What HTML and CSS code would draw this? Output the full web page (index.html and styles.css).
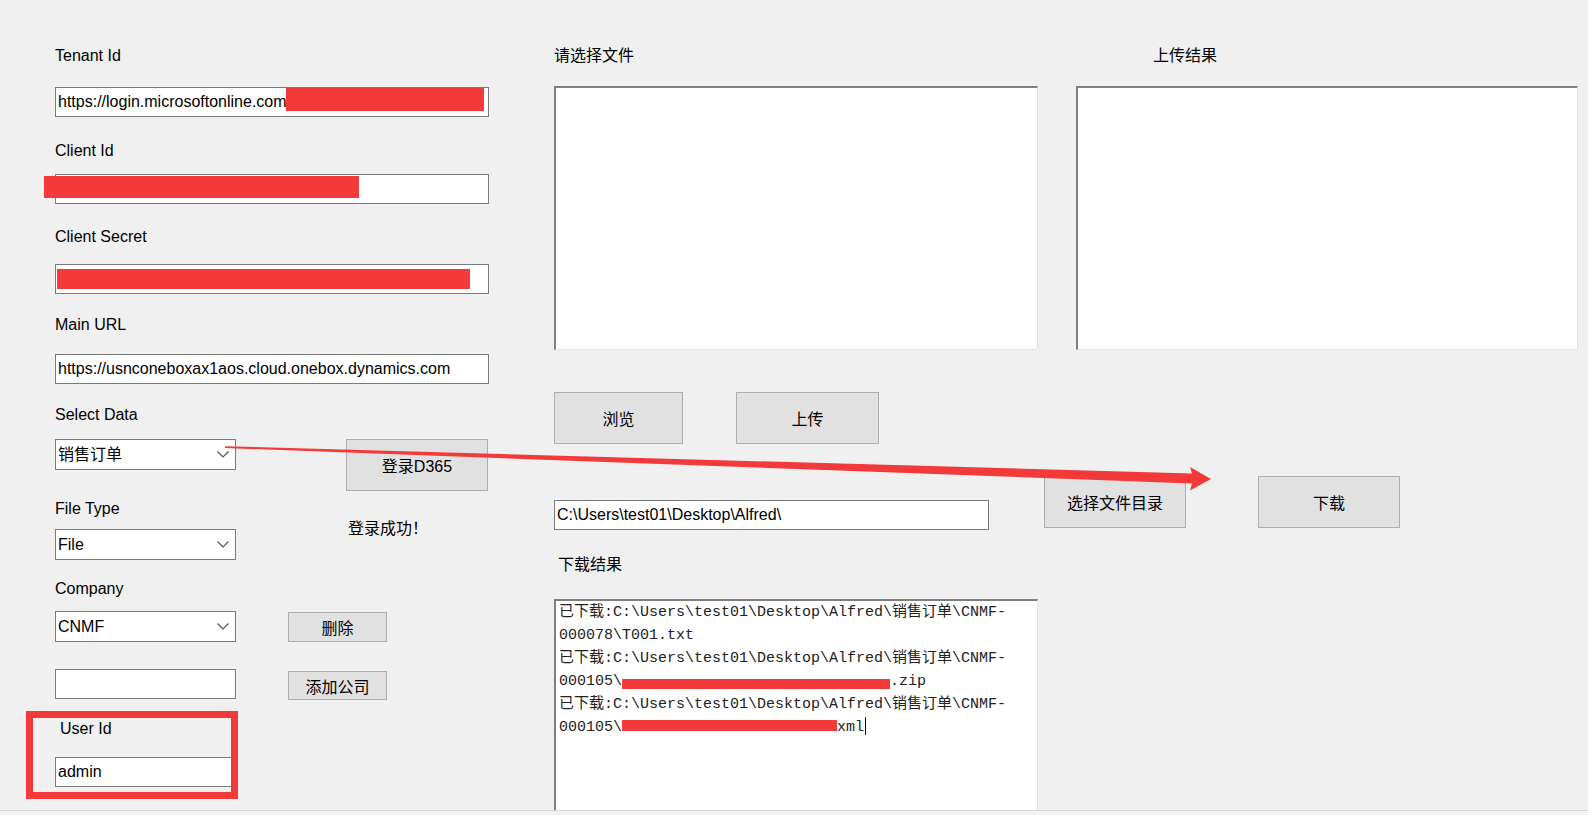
FILE: index.html
```html
<!DOCTYPE html>
<html lang="zh-cn">
<head>
    <meta charset="UTF-8">
    <title>D365 文件上传下载</title>
    <link rel="stylesheet" href="styles.css">
</head>
<body>
    <div class="window">
        <div class="left">
            <div class="field tenant">
                <div class="lbl">Tenant Id</div>
                <div class="textbox">https://login.microsoftonline.com<span class="redact r-tenant"></span></div>
            </div>
            <div class="field client">
                <div class="lbl">Client Id</div>
                <div class="textbox"><span class="redact r-client"></span></div>
            </div>
            <div class="field secret">
                <div class="lbl">Client Secret</div>
                <div class="textbox"><span class="redact r-secret"></span></div>
            </div>
            <div class="field mainurl">
                <div class="lbl">Main URL</div>
                <div class="textbox">https://usnconeboxax1aos.cloud.onebox.dynamics.com</div>
            </div>

            <div class="lower">
                <div class="col-a">
                    <div class="field sel-data">
                        <div class="lbl">Select Data</div>
                        <div class="combo"><span>销售订单</span><svg class="chev" width="12" height="7" viewBox="0 0 12 7"><path d="M0.5 0.5 L6 6 L11.5 0.5" fill="none" stroke="#555" stroke-width="1.2"/></svg></div>
                    </div>
                    <div class="field file-type">
                        <div class="lbl">File Type</div>
                        <div class="combo"><span>File</span><svg class="chev" width="12" height="7" viewBox="0 0 12 7"><path d="M0.5 0.5 L6 6 L11.5 0.5" fill="none" stroke="#555" stroke-width="1.2"/></svg></div>
                    </div>
                    <div class="field company">
                        <div class="lbl">Company</div>
                        <div class="combo"><span>CNMF</span><svg class="chev" width="12" height="7" viewBox="0 0 12 7"><path d="M0.5 0.5 L6 6 L11.5 0.5" fill="none" stroke="#555" stroke-width="1.2"/></svg></div>
                    </div>
                    <div class="textbox new-company"></div>
                </div>
                <div class="col-b">
                    <div class="btn btn-login">登录D365</div>
                    <div class="status">登录成功！</div>
                    <div class="btn btn-del">删除</div>
                    <div class="btn btn-add">添加公司</div>
                </div>
            </div>

            <div class="field user">
                <div class="lbl">User Id</div>
                <div class="textbox">admin</div>
                <div class="mark-box"></div>
            </div>
        </div>

        <div class="right">
            <div class="top-row">
                <div class="panel">
                    <div class="lbl">请选择文件</div>
                    <div class="listbox"></div>
                </div>
                <div class="panel panel-result">
                    <div class="lbl">上传结果</div>
                    <div class="listbox"></div>
                </div>
            </div>

            <div class="btn-row">
                <div class="btn btn-browse">浏览</div>
                <div class="btn btn-upload">上传</div>
            </div>

            <div class="path-row">
                <div class="textbox path">C:\Users\test01\Desktop\Alfred\</div>
                <div class="btn btn-dir">选择文件目录</div>
                <div class="btn btn-down">下载</div>
            </div>

            <div class="lbl down-lbl">下载结果</div>
            <div class="result">
                <div>已下载:C:\Users\test01\Desktop\Alfred\销售订单\CNMF-</div>
                <div>000078\T001.txt</div>
                <div>已下载:C:\Users\test01\Desktop\Alfred\销售订单\CNMF-</div>
                <div>000105\<span class="redact-line r-zip"></span>.zip</div>
                <div>已下载:C:\Users\test01\Desktop\Alfred\销售订单\CNMF-</div>
                <div>000105\<span class="redact-line r-xml"></span>xml<span class="caret"></span></div>
            </div>
        </div>

        <!-- annotation arrow drawn over the form -->
        <svg class="arrow" width="1588" height="815" viewBox="0 0 1588 815">
            <polygon points="225,446.2 1192,473.5 1190,467 1211,479 1190,490.5 1192,483.5 225,448" fill="#f23a3a"/>
        </svg>
    </div>
</body>
</html>
```

FILE: styles.css
```css
body {
    margin: 0;
    background: #f2f2f2;
    font-family: "Liberation Sans", "Noto Sans CJK SC", sans-serif;
    font-size: 16px;
    color: #000;
}
.window {
    position: relative;
    display: flex;
    width: 1588px;
    height: 811px;
    padding-top: 47px;
    box-sizing: border-box;
    background: #f0f0f0;
    border-bottom: 1px solid #d6d6d6;
    overflow: hidden;
}
.lbl {
    height: 18px;
    line-height: 18px;
    white-space: nowrap;
}
.textbox,
.combo {
    position: relative;
    height: 30px;
    line-height: 28px;
    padding-left: 2px;
    box-sizing: border-box;
    border: 1px solid #7a7a7a;
    background: #fff;
    white-space: nowrap;
}
.combo {
    height: 31px;
    display: flex;
    align-items: center;
    justify-content: space-between;
    padding-right: 6px;
}
.chev {
    display: block;
}
.redact {
    position: absolute;
    background: #f33b3b;
}
.r-tenant {
    left: 230px;
    top: 0;
    width: 198px;
    height: 23px;
}
.r-client {
    left: -12px;
    top: 1px;
    width: 315px;
    height: 22px;
}
.r-secret {
    left: 1px;
    top: 4px;
    width: 413px;
    height: 20px;
}
.btn {
    display: flex;
    align-items: center;
    justify-content: center;
    box-sizing: border-box;
    background: #e1e1e1;
    border: 1px solid #adadad;
    white-space: nowrap;
}

/* left column */
.left {
    width: 434px;
    margin-left: 55px;
}
.field .textbox {
    margin-top: 21px;
}
.tenant .textbox {
    margin-top: 22px;
}
.client {
    margin-top: 25px;
}
.client .textbox {
    margin-top: 14px;
}
.secret {
    margin-top: 24px;
}
.secret .textbox {
    margin-top: 18px;
}
.mainurl {
    margin-top: 22px;
}
.mainurl .textbox {
    margin-top: 20px;
}
.lower {
    display: flex;
    margin-top: 22px;
}
.col-a {
    width: 181px;
}
.sel-data .combo {
    margin-top: 15px;
}
.file-type {
    margin-top: 30px;
}
.file-type .combo {
    margin-top: 11px;
}
.company {
    margin-top: 20px;
}
.company .combo {
    margin-top: 13px;
}
.new-company {
    margin-top: 27px;
}
.col-b {
    display: flex;
    flex-direction: column;
    align-items: flex-start;
    margin-left: 52px;
}
.btn-login {
    margin-top: 33px;
    margin-left: 58px;
    width: 142px;
    height: 52px;
}
.status {
    margin-top: 29px;
    margin-left: 60px;
    line-height: 18px;
}
.btn-del {
    margin-top: 74px;
    width: 99px;
    height: 30px;
}
.btn-add {
    margin-top: 29px;
    width: 99px;
    height: 29px;
}
.user {
    position: relative;
    width: 181px;
    margin-top: 20px;
}
.user .lbl {
    margin-left: 5px;
}
.user .textbox {
    margin-top: 19px;
}
.mark-box {
    position: absolute;
    left: -29px;
    top: -9px;
    width: 212px;
    height: 88px;
    border: 7px solid #f23a3a;
    box-sizing: border-box;
}

/* right side */
.right {
    margin-left: 65px;
}
.top-row {
    display: flex;
}
.panel {
    width: 484px;
}
.panel-result {
    width: 502px;
    margin-left: 38px;
}
.panel-result .lbl {
    margin-left: 77px;
}
.listbox {
    height: 264px;
    margin-top: 21px;
    box-sizing: border-box;
    background: #fff;
    border-top: 2px solid #7f7f7f;
    border-left: 2px solid #7f7f7f;
    border-right: 1px solid #e3e3e3;
    border-bottom: 1px solid #e3e3e3;
}
.btn-row {
    display: flex;
    margin-top: 42px;
}
.btn-browse {
    width: 129px;
    height: 52px;
}
.btn-upload {
    width: 143px;
    height: 52px;
    margin-left: 53px;
}
.path-row {
    display: flex;
    align-items: flex-start;
    margin-top: 32px;
}
.path {
    width: 435px;
    margin-top: 24px;
}
.btn-dir {
    width: 142px;
    height: 52px;
    margin-left: 55px;
}
.btn-down {
    width: 142px;
    height: 52px;
    margin-left: 72px;
}
.down-lbl {
    margin-top: 26px;
    margin-left: 4px;
}
.result {
    width: 484px;
    height: 240px;
    margin-top: 25px;
    padding-left: 3px;
    box-sizing: border-box;
    background: #fff;
    border-top: 2px solid #7f7f7f;
    border-left: 2px solid #7f7f7f;
    border-right: 1px solid #e3e3e3;
    font-family: "Liberation Mono", "Noto Sans CJK SC", monospace;
    font-size: 15px;
    line-height: 23px;
    color: #222;
    white-space: nowrap;
}
.redact-line {
    display: inline-block;
    background: #f33b3b;
}
.r-zip {
    width: 268px;
    height: 10px;
    vertical-align: -4px;
}
.r-xml {
    width: 215px;
    height: 11px;
    vertical-align: 0;
}
.caret {
    display: inline-block;
    width: 1px;
    height: 18px;
    margin-left: 1px;
    background: #000;
    vertical-align: -4px;
}
.arrow {
    position: absolute;
    left: 0;
    top: 0;
    pointer-events: none;
}
```
